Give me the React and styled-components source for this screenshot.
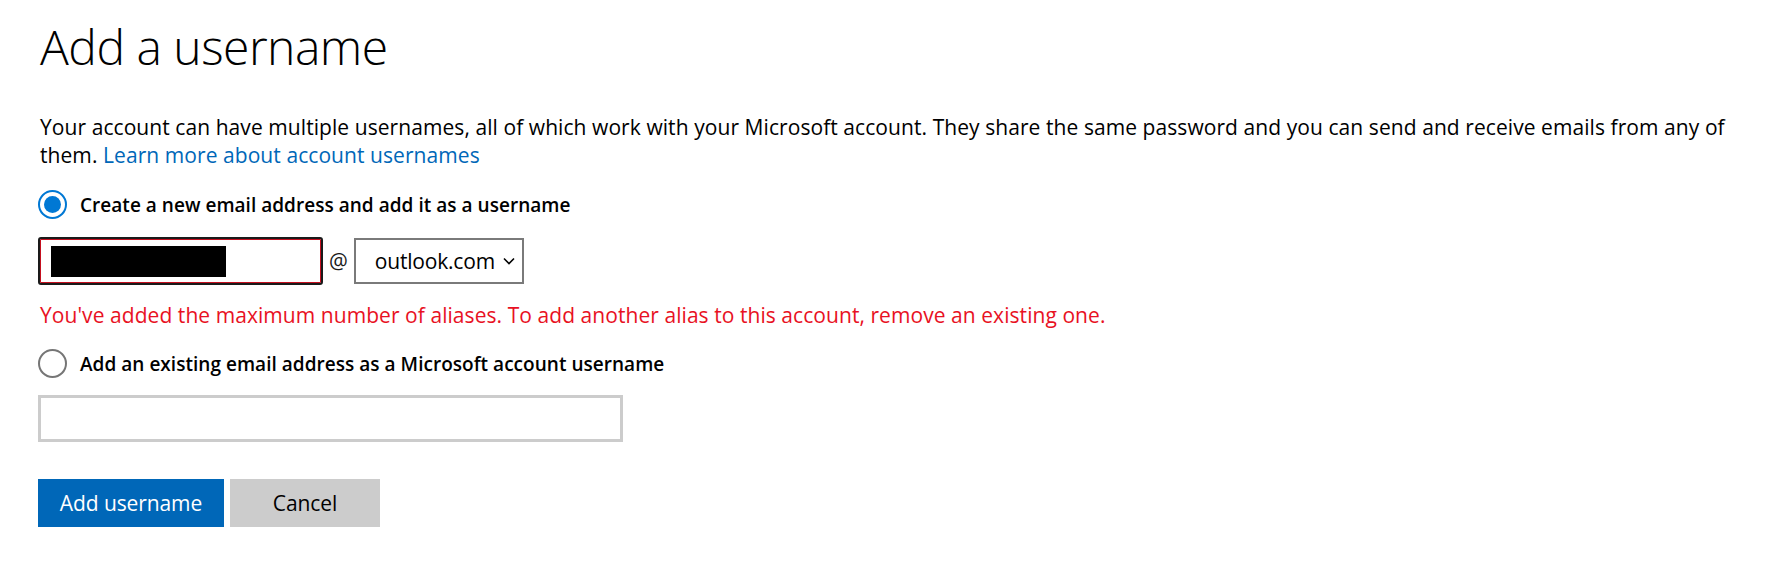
import React from "react";
import styled, { createGlobalStyle } from "styled-components";

const Global = createGlobalStyle`
  html, body { margin: 0; padding: 0; background: #fff; }
  body { font-family: "Open Sans", "Noto Sans", sans-serif; color: #000; }
`;

const Page = styled.main`
  padding: 17px 38px 0 38px;
  display: flex;
  flex-direction: column;
  align-items: flex-start;
`;

const Title = styled.h1`
  margin: 0 0 0 2px;
  font-weight: 300;
  font-size: 48px;
  line-height: 60px;
  letter-spacing: -0.5px;
`;

const Intro = styled.p`
  margin: 36px 0 0 2px;
  font-size: 21px;
  line-height: 28px;
  letter-spacing: 0.07px;
  max-width: 1720px;
`;

const Link = styled.a`
  color: #0067b8;
  text-decoration: none;
`;

const RadioRow = styled.label`
  display: flex;
  align-items: center;
  gap: 13px;
  margin-top: ${(p) => p.$mt}px;
  font-size: 19px;
  font-weight: 600;
  letter-spacing: 0.03px;
  line-height: 28px;
  cursor: pointer;
`;

const RadioCircle = styled.span`
  box-sizing: border-box;
  width: 29px;
  height: 29px;
  border-radius: 50%;
  border: 2px solid ${(p) => (p.$checked ? "#0078d4" : "#767676")};
  display: flex;
  align-items: center;
  justify-content: center;
  flex: none;
  &::after {
    content: "";
    display: ${(p) => (p.$checked ? "block" : "none")};
    width: 17px;
    height: 17px;
    border-radius: 50%;
    background: #0078d4;
  }
`;

const AliasRow = styled.div`
  display: flex;
  align-items: center;
  margin-top: 18px;
`;

const AliasInput = styled.div`
  box-sizing: border-box;
  width: 285px;
  height: 48px;
  border: 2px solid #1a1a1a;
  border-radius: 3px;
  box-shadow: inset 0 0 0 1px #c50f1f;
  padding: 7px 11px;
  display: flex;
  align-items: center;
`;

const Redaction = styled.span`
  display: block;
  width: 175px;
  height: 31px;
  background: #000;
`;

const At = styled.span`
  font-size: 21px;
  margin: 0 6px 0 6px;
  color: #1a1a1a;
`;

const Select = styled.div`
  box-sizing: border-box;
  width: 170px;
  height: 46px;
  border: 2px solid #7a7a7a;
  display: flex;
  align-items: center;
  padding: 0 0 0 19px;
  font-size: 21px;
  letter-spacing: -0.2px;
  gap: 8px;
`;

const Chevron = styled.svg`
  width: 12px;
  height: 8px;
  flex: none;
`;

const ErrorText = styled.div`
  margin: 16px 0 0 2px;
  color: #e81123;
  font-size: 21px;
  line-height: 28px;
  letter-spacing: 0.06px;
`;

const TextBox = styled.input`
  box-sizing: border-box;
  width: 585px;
  height: 47px;
  border: 3px solid #cccccc;
  margin-top: 17px;
  outline: none;
  font: inherit;
  padding: 0 10px;
`;

const Actions = styled.div`
  display: flex;
  gap: 6px;
  margin-top: 37px;
`;

const Button = styled.button`
  box-sizing: border-box;
  height: 48px;
  width: ${(p) => p.$w}px;
  border: none;
  font-family: "Open Sans", "Noto Sans", sans-serif;
  font-size: 21px;
  letter-spacing: -0.1px;
  background: ${(p) => (p.$primary ? "#0067b8" : "#cccccc")};
  color: ${(p) => (p.$primary ? "#fff" : "#000")};
  padding: 0;
  cursor: pointer;
`;

export default function App() {
  return (
    <>
      <Global />
      <Page>
        <Title>Add a username</Title>
        <Intro>
          Your account can have multiple usernames, all of which work with your Microsoft account. They share the same
          password and you can send and receive emails from any of them.{" "}
          <Link href="#">Learn more about account usernames</Link>
        </Intro>
        <RadioRow $mt={21}>
          <RadioCircle $checked />
          Create a new email address and add it as a username
        </RadioRow>
        <AliasRow>
          <AliasInput>
            <Redaction />
          </AliasInput>
          <At>@</At>
          <Select>
            outlook.com
            <Chevron viewBox="0 0 12 8">
              <polyline points="1,1.5 6,6.5 11,1.5" fill="none" stroke="#000" strokeWidth="1.6" />
            </Chevron>
          </Select>
        </AliasRow>
        <ErrorText>
          You've added the maximum number of aliases. To add another alias to this account, remove an existing one.
        </ErrorText>
        <RadioRow $mt={20}>
          <RadioCircle />
          Add an existing email address as a Microsoft account username
        </RadioRow>
        <TextBox type="text" />
        <Actions>
          <Button $primary $w={186}>Add username</Button>
          <Button $w={150}>Cancel</Button>
        </Actions>
      </Page>
    </>
  );
}
